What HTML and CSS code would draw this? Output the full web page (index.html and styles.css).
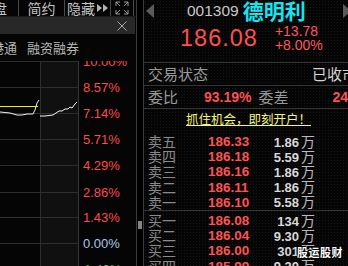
FILE: index.html
```html
<!DOCTYPE html>
<html lang="zh">
<head>
  <meta charset="UTF-8" />
  <title>德明利 分时</title>
  <link rel="stylesheet" href="styles.css">
</head>
<body>
  <div class="app">
    <!-- left: tabs + intraday chart -->
    <div class="left">
      <div class="tabs">
        <div class="tab tab-cut"><span>盘</span></div>
        <div class="tab">简约</div>
        <div class="tab">隐藏
          <svg class="arrows" width="11" height="8" viewBox="0 0 11 8"><polygon points="0,0 5,4 0,8" fill="#b4b4b4"/><polygon points="6,0 11,4 6,8" fill="#b4b4b4"/></svg>
        </div>
        <div class="tab tab-icon">
          <svg width="14" height="14" viewBox="0 0 14 14" fill="none" stroke="#9a9a9a" stroke-width="1">
            <path d="M1 5V1h4M1 1l4 4M9 1h4v4M13 1L9 5M1 9v4h4M1 13l4-4M13 9v4H9M13 13L9 9"/>
          </svg>
        </div>
      </div>
      <div class="search">
        <svg class="close" width="10" height="10" viewBox="0 0 10 10" stroke="#a8a8a8" stroke-width="1"><path d="M0.5 0.5l9 9M9.5 0.5l-9 9"/></svg>
      </div>
      <div class="subtabs">
        <span class="sub sub-cut">深港通</span>
        <span class="sub">融资融券</span>
      </div>
      <svg class="chart" width="136" height="205" viewBox="0 0 136 205">
        <rect x="0" y="0" width="40" height="205" fill="#050505"/>
        <rect x="40" y="0" width="38" height="205" fill="#101010"/>
        <g stroke="#2e2e2e" stroke-width="1">
          <line x1="0" y1="0.5" x2="78" y2="0.5"/>
          <line x1="0" y1="26.5" x2="78" y2="26.5"/>
          <line x1="0" y1="52.5" x2="78" y2="52.5"/>
          <line x1="0" y1="78.5" x2="78" y2="78.5"/>
          <line x1="0" y1="104.5" x2="78" y2="104.5"/>
          <line x1="0" y1="131.5" x2="78" y2="131.5"/>
          <line x1="0" y1="156.5" x2="78" y2="156.5"/>
          <line x1="0" y1="182.5" x2="78" y2="182.5"/>
          <line x1="40.5" y1="0" x2="40.5" y2="205"/>
          <line x1="78.5" y1="0" x2="78.5" y2="205" stroke="#383838"/>
        </g>
        <line x1="0" y1="45.5" x2="38" y2="45.5" stroke="#f0f000" stroke-width="1"/>
        <polyline fill="none" stroke="#f2f2f2" stroke-width="1"
          points="0,51 10,52 17,54 22,54 27,53 33,53 35,49 37,42 39,39"/>
        <polyline fill="none" stroke="#f2f2f2" stroke-width="1"
          points="40,55 45,55 53,54 56,52 59,50 62,50 65,48 68,48 70,46 72,47 75,43 77,41"/>
        <g class="axis" font-size="13">
          <text x="83" y="5" fill="#ff4a4a">10.00%</text>
          <text x="83" y="31" fill="#ff4a4a">8.57%</text>
          <text x="83" y="57" fill="#ff4a4a">7.14%</text>
          <text x="83" y="83" fill="#ff4a4a">5.71%</text>
          <text x="83" y="109" fill="#ff4a4a">4.29%</text>
          <text x="83" y="136" fill="#ff4a4a">2.86%</text>
          <text x="83" y="161" fill="#ff4a4a">1.43%</text>
          <text x="83" y="187" fill="#a8c8e8">0.00%</text>
          <text x="80" y="213" fill="#3ad23a">-1.43%</text>
        </g>
      </svg>
    </div>

    <div class="grip">
      <div class="dots"></div>
    </div>

    <!-- right: quote panel -->
    <div class="right">
      <div class="head">
        <div class="title-row">
          <svg class="nav" width="8" height="14" viewBox="0 0 8 14"><polygon points="8,0 8,14 0,7" fill="#5a5a5a"/></svg>
          <span class="code">001309</span>
          <span class="name">德明利</span>
          <svg class="nav nav-right" width="8" height="14" viewBox="0 0 8 14"><polygon points="0,0 0,14 8,7" fill="#5a5a5a"/></svg>
        </div>
        <div class="price-row">
          <span class="price">186.08</span>
          <div class="change">
            <span>+13.78</span>
            <span>+8.00%</span>
          </div>
        </div>
      </div>

      <div class="info-row">
        <span class="label">交易状态</span>
        <span class="status">已收市</span>
      </div>
      <div class="info-row">
        <span class="label">委比</span>
        <span class="ratio">93.19%</span>
        <span class="label label-diff">委差</span>
        <span class="ratio diff">2400</span>
      </div>

      <div class="ad">抓住机会，即刻开户！</div>

      <div class="book sell">
        <div class="order"><span class="ol">卖五</span><span class="op">186.33</span><span class="ov">1.86<i>万</i></span></div>
        <div class="order"><span class="ol">卖四</span><span class="op">186.18</span><span class="ov">5.59<i>万</i></span></div>
        <div class="order"><span class="ol">卖三</span><span class="op">186.16</span><span class="ov">1.86<i>万</i></span></div>
        <div class="order"><span class="ol">卖二</span><span class="op">186.11</span><span class="ov">1.86<i>万</i></span></div>
        <div class="order"><span class="ol">卖一</span><span class="op">186.10</span><span class="ov">5.58<i>万</i></span></div>
      </div>
      <div class="book buy">
        <div class="order"><span class="ol">买一</span><span class="op">186.08</span><span class="ov">134<i>万</i></span></div>
        <div class="order"><span class="ol">买二</span><span class="op">186.04</span><span class="ov">9.30<i>万</i></span></div>
        <div class="order"><span class="ol">买三</span><span class="op">186.00</span><span class="ov">301<i>万</i></span></div>
        <div class="order"><span class="ol">买四</span><span class="op">185.99</span><span class="ov">9.30<i>万</i></span></div>
      </div>

      <div class="watermark">股运股财</div>
    </div>
  </div>
</body>
</html>
```
FILE: styles.css
```css
body {
  margin: 0;
  padding: 0;
  width: 348px;
  height: 266px;
  overflow: hidden;
  background: #000;
  font-family: "Noto Sans CJK SC", "Liberation Sans", sans-serif;
  color: #c0c0c0;
}
.app {
  display: flex;
  height: 266px;
}

/* LEFT PANEL */
.left {
  width: 137px;
  flex: none;
  box-sizing: border-box;
  border-right: 1px solid #3a3a3a;
  background: #050505;
  overflow: hidden;
}
.tabs {
  display: flex;
  height: 17px;
  box-sizing: border-box;
  border-bottom: 1px solid #1a1a1a;
}
.tab {
  width: 46px;
  flex: none;
  box-sizing: border-box;
  border-right: 1px solid #4a4a4a;
  display: flex;
  align-items: center;
  justify-content: center;
  font-size: 14px;
  line-height: 16px;
  color: #c4c4c4;
  white-space: nowrap;
}
.tab-cut {
  width: 19px;
  justify-content: flex-end;
  overflow: hidden;
}
.tab-cut span {
  margin-right: 11px;
}
.arrows {
  margin-left: 2px;
  flex: none;
}
.tab-icon {
  width: 23px;
}
.search {
  height: 17px;
  margin-right: 1px;
  background: #282828;
  display: flex;
  align-items: center;
  justify-content: flex-end;
  padding-right: 8px;
}
.close {
  display: block;
}
.subtabs {
  height: 27px;
  display: flex;
  align-items: center;
  gap: 10px;
  font-size: 13px;
  line-height: 16px;
  color: #b8b8b8;
  white-space: nowrap;
}
.sub-cut {
  margin-left: -22px;
}
.chart {
  display: block;
}
.axis text {
  font-family: "Liberation Sans", sans-serif;
}

/* SPLITTER */
.grip {
  width: 6px;
  flex: none;
  background: #000;
  padding-top: 221px;
  box-sizing: border-box;
  display: flex;
  justify-content: center;
}
.dots {
  width: 4px;
  height: 8px;
  background-image: radial-gradient(#8a8a8a 0.7px, transparent 0.9px);
  background-size: 2px 2px;
}

/* RIGHT PANEL */
.right {
  position: relative;
  width: 210px;
  flex: none;
  box-sizing: border-box;
  border-left: 1px solid #3a3a3a;
  background-color: #050505;
  background-image: radial-gradient(#161616 0.6px, transparent 0.9px);
  background-size: 3px 3px;
  overflow: hidden;
}
.head {
  height: 62px;
  border-bottom: 1px solid #343434;
}
.title-row {
  display: flex;
  align-items: center;
  height: 21px;
  padding-left: 2px;
}
.nav {
  flex: none;
}
.nav-right {
  margin-left: auto;
  margin-right: 2px;
}
.code {
  margin-left: 33px;
  font-family: "Liberation Sans", sans-serif;
  font-size: 15.5px;
  color: #c8c8c8;
}
.name {
  margin-left: 4px;
  font-size: 21px;
  font-weight: bold;
  color: #18e4f0;
  line-height: 21px;
}
.price-row {
  display: flex;
  align-items: center;
  padding-left: 36px;
  height: 34px;
}
.price {
  font-family: "Liberation Sans", sans-serif;
  font-size: 23.5px;
  letter-spacing: 1px;
  color: #ff4f4f;
}
.change {
  display: flex;
  flex-direction: column;
  margin-left: 17px;
  font-family: "Liberation Sans", sans-serif;
  font-size: 14px;
  line-height: 14px;
  color: #ff5a5a;
}
.info-row {
  display: flex;
  align-items: center;
  height: 22px;
  border-bottom: 1px solid #343434;
  padding-left: 4px;
  white-space: nowrap;
  line-height: 18px;
}
.label {
  font-size: 15px;
  color: #9a9a9a;
}
.status {
  margin-left: auto;
  font-size: 15px;
  color: #d4d4d4;
  margin-right: -4px;
}
.ratio {
  font-family: "Liberation Sans", sans-serif;
  font-size: 14px;
  font-weight: bold;
  color: #ff5050;
  margin-left: 26px;
}
.label-diff {
  margin-left: 7px;
}
.diff {
  margin-left: 44px;
}
.ad {
  height: 24px;
  box-sizing: border-box;
  padding-top: 2px;
  text-align: center;
  font-size: 12.5px;
  line-height: 16px;
  color: #f4f47a;
  text-decoration: underline;
  text-underline-offset: 1px;
  white-space: nowrap;
}
.book {
  padding-top: 1px;
}
.sell {
  border-bottom: 1px solid #343434;
}
.buy {
  padding-top: 2px;
}
.order {
  display: flex;
  align-items: center;
  height: 15.2px;
  line-height: 15px;
  white-space: nowrap;
}
.ol {
  width: 60px;
  padding-left: 4px;
  font-size: 14px;
  color: #8a8a8a;
}
.op {
  width: 44px;
  font-family: "Liberation Sans", sans-serif;
  font-size: 13.5px;
  font-weight: bold;
  color: #ff5252;
}
.ov {
  width: 63px;
  text-align: right;
  font-family: "Liberation Sans", sans-serif;
  font-size: 13px;
  font-weight: bold;
  color: #d8d8d8;
}
.ov i {
  font-style: normal;
  font-weight: normal;
  font-family: "Noto Sans CJK SC", sans-serif;
  font-size: 14px;
  color: #bcbcbc;
  margin-left: 2px;
}
.watermark {
  position: absolute;
  left: 153px;
  top: 245px;
  font-size: 11px;
  line-height: 14px;
  font-weight: bold;
  color: #ffffff;
  text-shadow: 0 0 2px #000, 0 0 2px #000, 0 0 1px #000;
  letter-spacing: 0.5px;
}
```
